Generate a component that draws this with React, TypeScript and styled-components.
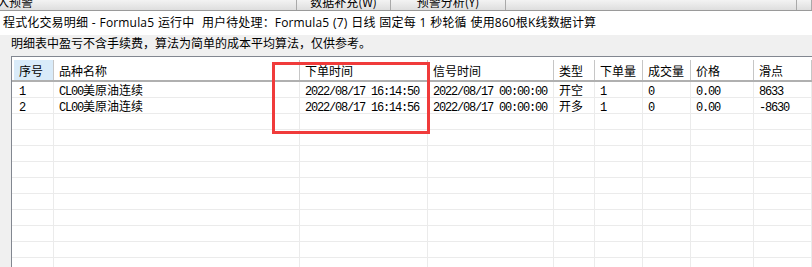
import React from 'react';
import styled, { createGlobalStyle } from 'styled-components';

const CJK = `"Noto Sans CJK SC", "Microsoft YaHei", sans-serif`;
const TITLE = `"Open Sans", "Noto Sans CJK SC", sans-serif`;
const MONO = `"Liberation Mono", "Noto Sans CJK SC", monospace`;

const Global = createGlobalStyle`
  html, body { margin: 0; padding: 0; background: #f0f0f0; overflow: hidden; }
  #root { width: 812px; height: 267px; }
`;

const Window = styled.div`
  position: relative;
  width: 812px;
  height: 267px;
  overflow: hidden;
  background: #f0f0f0;
  display: flex;
  flex-direction: column;
  font-family: ${CJK};
  color: #000;
`;

const TabStrip = styled.div`
  flex: none;
  display: grid;
  grid-template-columns: 297px 94px 115px 291px 1fr;
  height: 10px;
  border-bottom: 1px solid #9a9a9a;
  background: linear-gradient(#f3f3f3, #dedede);
  overflow: hidden;
`;

const TabCell = styled.div<{ $align?: 'left' | 'center' }>`
  border-right: 1px solid #a9a9a9;
  font-size: 12px;
  line-height: 12px;
  text-align: ${(p) => p.$align ?? 'center'};
  white-space: nowrap;
  overflow: hidden;
`;

const TabLabel = styled.span<{ $shift?: number }>`
  display: block;
  margin-top: -4px;
  margin-left: ${(p) => p.$shift ?? 0}px;
`;

const TitleBar = styled.div`
  flex: none;
  height: 24px;
  background: #fff;
  padding-left: 3px;
  font-family: ${TITLE};
  font-size: 12px;
  line-height: 23px;
  letter-spacing: 0.15px;
  word-spacing: 0.5px;
  white-space: nowrap;
`;

const Note = styled.div`
  flex: none;
  height: 21px;
  padding-left: 11px;
  font-size: 12px;
  line-height: 16px;
  white-space: nowrap;
`;

const Table = styled.div`
  flex: 1;
  margin-left: 11px;
  background: #fff;
  border-top: 1px solid #828790;
  border-left: 1px solid #828790;
  display: grid;
  grid-template-columns: 42px 246px 128px 126px 41px 48px 48px 63px 1fr;
  grid-template-rows: 25px;
  grid-auto-rows: 16px;
  align-content: start;
  overflow: hidden;
`;

const HeaderCell = styled.div`
  box-sizing: border-box;
  height: 25px;
  padding-top: 3px;
  border-bottom: 2px solid #b0b0b0;
  background: #fff;
`;

const HeaderInner = styled.div<{ $first?: boolean; $active?: boolean }>`
  box-sizing: border-box;
  height: 20px;
  margin-left: ${(p) => (p.$first ? 2 : 0)}px;
  padding-left: 5px;
  border-right: 1px solid #c6c6c6;
  background: ${(p) => (p.$active ? '#d9ebf9' : 'transparent')};
  display: flex;
  align-items: center;
  font-size: 12px;
  white-space: nowrap;
  overflow: hidden;
`;

const BodyCell = styled.div<{ $first?: boolean }>`
  box-sizing: border-box;
  height: 16px;
  padding-left: ${(p) => (p.$first ? 7 : 5)}px;
  border-right: 1px solid #ebebeb;
  border-bottom: 1px solid #ebebeb;
  font-size: 12px;
  line-height: 15px;
  white-space: nowrap;
  overflow: hidden;
`;

const Mono = styled.span`
  font-family: ${MONO};
  font-size: 12px;
  letter-spacing: -1.2px;
`;

const RedBox = styled.div`
  position: absolute;
  left: 272px;
  top: 62px;
  width: 158px;
  height: 72px;
  box-sizing: border-box;
  border: 3px solid #f03b3b;
  pointer-events: none;
`;

const headers = ['序号', '品种名称', '下单时间', '信号时间', '类型', '下单量', '成交量', '价格', '滑点'];

type Row = {
  no: string;
  code: string;
  name: string;
  order: string;
  signal: string;
  type: string;
  qty: string;
  filled: string;
  price: string;
  slip: string;
};

const rows: Row[] = [
  {
    no: '1',
    code: 'CL00',
    name: '美原油连续',
    order: '2022/08/17 16:14:50',
    signal: '2022/08/17 00:00:00',
    type: '开空',
    qty: '1',
    filled: '0',
    price: '0.00',
    slip: '8633',
  },
  {
    no: '2',
    code: 'CL00',
    name: '美原油连续',
    order: '2022/08/17 16:14:56',
    signal: '2022/08/17 00:00:00',
    type: '开多',
    qty: '1',
    filled: '0',
    price: '0.00',
    slip: '-8630',
  },
];

const EMPTY_ROWS = 10;

export default function App() {
  return (
    <Window>
      <Global />
      <TabStrip>
        <TabCell $align="left">
          <TabLabel $shift={-3}>入预警</TabLabel>
        </TabCell>
        <TabCell>
          <TabLabel>数据补充(W)</TabLabel>
        </TabCell>
        <TabCell>
          <TabLabel>预警分析(Y)</TabLabel>
        </TabCell>
        <TabCell />
        <TabCell />
      </TabStrip>
      <TitleBar>
        程式化交易明细 - Formula5 运行中&nbsp; 用户待处理：Formula5 (7) 日线 固定每 1 秒轮循 使用860根K线数据计算
      </TitleBar>
      <Note>明细表中盈亏不含手续费，算法为简单的成本平均算法，仅供参考。</Note>
      <Table>
        {headers.map((h, i) => (
          <HeaderCell key={h}>
            <HeaderInner $first={i === 0} $active={i === 0}>
              {h}
            </HeaderInner>
          </HeaderCell>
        ))}
        {rows.map((r) => (
          <React.Fragment key={r.no}>
            <BodyCell $first>
              <Mono>{r.no}</Mono>
            </BodyCell>
            <BodyCell>
              <Mono>{r.code}</Mono>
              {r.name}
            </BodyCell>
            <BodyCell>
              <Mono>{r.order}</Mono>
            </BodyCell>
            <BodyCell>
              <Mono>{r.signal}</Mono>
            </BodyCell>
            <BodyCell>{r.type}</BodyCell>
            <BodyCell>
              <Mono>{r.qty}</Mono>
            </BodyCell>
            <BodyCell>
              <Mono>{r.filled}</Mono>
            </BodyCell>
            <BodyCell>
              <Mono>{r.price}</Mono>
            </BodyCell>
            <BodyCell>
              <Mono>{r.slip}</Mono>
            </BodyCell>
          </React.Fragment>
        ))}
        {Array.from({ length: EMPTY_ROWS }).map((_, ri) =>
          headers.map((h, ci) => <BodyCell key={`e-${ri}-${h}`} $first={ci === 0} />)
        )}
      </Table>
      <RedBox />
    </Window>
  );
}
